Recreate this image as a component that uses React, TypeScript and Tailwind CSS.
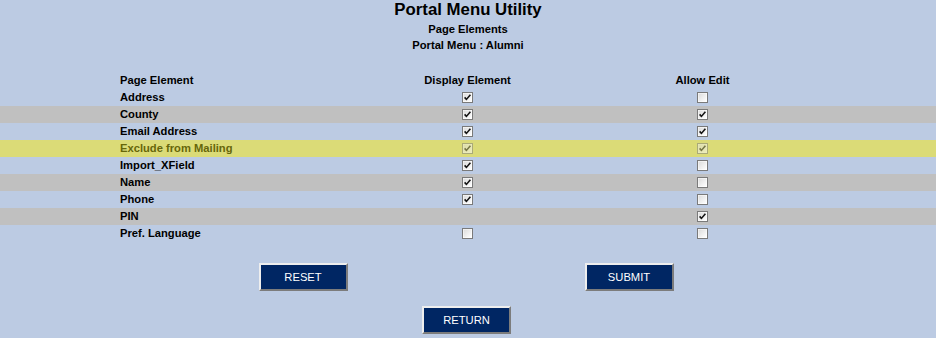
import React from "react";

type Row = { name: string; display: boolean | null; edit: boolean; bg: "blue" | "gray" | "yellow" };

const rows: Row[] = [
  { name: "Address", display: true, edit: false, bg: "blue" },
  { name: "County", display: true, edit: true, bg: "gray" },
  { name: "Email Address", display: true, edit: true, bg: "blue" },
  { name: "Exclude from Mailing", display: true, edit: true, bg: "yellow" },
  { name: "Import_XField", display: true, edit: false, bg: "blue" },
  { name: "Name", display: true, edit: false, bg: "gray" },
  { name: "Phone", display: true, edit: false, bg: "blue" },
  { name: "PIN", display: null, edit: true, bg: "gray" },
  { name: "Pref. Language", display: false, edit: false, bg: "blue" },
];

function Box({ checked, dim }: { checked: boolean; dim?: boolean }) {
  return (
    <svg width="11" height="11" viewBox="0 0 11 11" className={dim ? "opacity-50" : ""}>
      <defs>
        <linearGradient id="cbg" x1="0" y1="0" x2="1" y2="1">
          <stop offset="0" stopColor="#dcdcdc" />
          <stop offset="1" stopColor="#ffffff" />
        </linearGradient>
      </defs>
      <rect x="0.5" y="0.5" width="10" height="10" fill="#ffffff" stroke="#7a7a7a" />
      <rect x="1.5" y="1.5" width="8" height="8" fill="url(#cbg)" />
      {checked && (
        <path d="M2.6 5.4 L4.4 7.4 L8.4 2.8" fill="none" stroke="#141414" strokeWidth="1.6" />
      )}
    </svg>
  );
}

function Btn({ label }: { label: string }) {
  return (
    <button
      className="w-[89px] h-[28px] bg-[#002663] text-white font-normal text-[11.2px] border-2 border-solid border-t-[#eeeeee] border-l-[#eeeeee] border-r-[#7c7c7c] border-b-[#7c7c7c] flex items-center justify-center"
      style={{ fontFamily: '"Liberation Sans", Arial, sans-serif' }}
    >
      {label}
    </button>
  );
}

export default function App() {
  const bgClass = (b: Row["bg"]) =>
    b === "gray" ? "bg-[#c0c0c0]" : b === "yellow" ? "bg-[#dbdb77] text-[#66660a]" : "";
  return (
    <div
      className="w-[936px] h-[338px] bg-[#bccbe3] text-black font-bold text-[11.2px] overflow-hidden"
      style={{ fontFamily: '"Liberation Sans", Arial, sans-serif' }}
    >
      <div className="text-center text-[16.8px] leading-[19px]">Portal Menu Utility</div>
      <div className="pt-[2px] text-center leading-[16px]">
        <div>Page Elements</div>
        <div>Portal Menu : Alumni</div>
      </div>
      <div className="mt-[19px]">
        <div className="grid grid-cols-[120px_230px_235px_235px_1fr] h-[17px] items-center">
          <div />
          <div>Page Element</div>
          <div className="text-center">Display Element</div>
          <div className="text-center">Allow Edit</div>
          <div />
        </div>
        {rows.map((r) => (
          <div
            key={r.name}
            className={`grid grid-cols-[120px_230px_235px_235px_1fr] h-[17px] items-center ${bgClass(r.bg)}`}
          >
            <div />
            <div>{r.name}</div>
            <div className="flex justify-center">
              {r.display !== null && <Box checked={r.display} dim={r.bg === "yellow"} />}
            </div>
            <div className="flex justify-center">
              <Box checked={r.edit} dim={r.bg === "yellow"} />
            </div>
            <div />
          </div>
        ))}
      </div>
      <div className="mt-[21px] w-[652px] ml-[140px] grid grid-cols-2">
        <div className="flex justify-center">
          <Btn label="RESET" />
        </div>
        <div className="flex justify-center">
          <Btn label="SUBMIT" />
        </div>
      </div>
      <div className="mt-[15px] flex justify-center">
        <div className="mr-[3px]">
          <Btn label="RETURN" />
        </div>
      </div>
    </div>
  );
}
